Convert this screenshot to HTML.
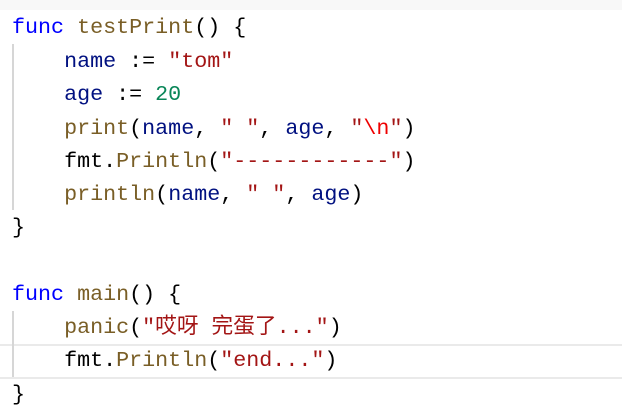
<html><head><style>
body{margin:0;width:622px;height:418px;background:#fff;overflow:hidden;position:relative;font-family:"Liberation Mono","Noto Sans CJK SC",monospace;font-size:21.7px}
.l{position:absolute;left:12px;white-space:pre;height:33px;line-height:33px}
.k{color:#0000ff}.f{color:#795e26}.v{color:#001080}.s{color:#a31515}.n{color:#098658}.d{color:#000}
.g{position:absolute;left:12px;width:2px;background:#d6d6d6}
</style></head><body>
<div style="position:absolute;top:0;left:0;width:622px;height:10px;background:#f8f8f8"></div>
<div style="position:absolute;left:0;top:344px;width:622px;height:31px;border-top:2px solid #eaeaea;border-bottom:2px solid #eaeaea"></div>
<div class="g" style="top:44px;height:166px"></div>
<div class="g" style="top:311px;height:66px"></div>
<div class="l" style="top:11px"><span class="k">func</span> <span class="f">testPrint</span>() {</div>
<div class="l" style="top:45px">    <span class="v">name</span> := <span class="s">"tom"</span></div>
<div class="l" style="top:78px">    <span class="v">age</span> := <span class="n">20</span></div>
<div class="l" style="top:112px">    <span class="f">print</span>(<span class="v">name</span>, <span class="s">" "</span>, <span class="v">age</span>, <span class="s">"</span><span style="color:#ee0000">\n</span><span class="s">"</span>)</div>
<div class="l" style="top:145px">    <span class="d">fmt</span>.<span class="f">Println</span>(<span class="s">"------------"</span>)</div>
<div class="l" style="top:178px">    <span class="f">println</span>(<span class="v">name</span>, <span class="s">" "</span>, <span class="v">age</span>)</div>
<div class="l" style="top:211px">}</div>
<div class="l" style="top:278px"><span class="k">func</span> <span class="f">main</span>() {</div>
<div class="l" style="top:311px">    <span class="f">panic</span>(<span class="s">"哎呀 完蛋了..."</span>)</div>
<div class="l" style="top:344px">    <span class="d">fmt</span>.<span class="f">Println</span>(<span class="s">"end..."</span>)</div>
<div class="l" style="top:378px">}</div>
</body></html>
